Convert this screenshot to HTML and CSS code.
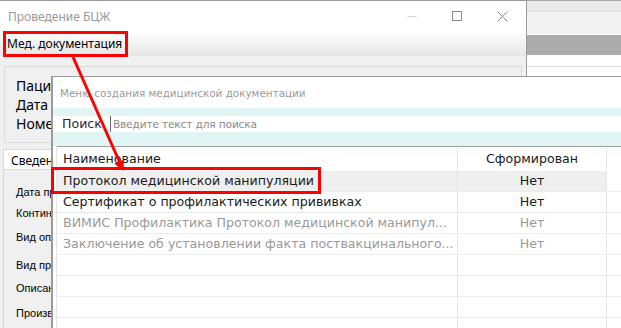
FILE: index.html
```html
<!DOCTYPE html>
<html lang="ru">
<head>
<meta charset="utf-8">
<title>Меню создания медицинской документации</title>
<link rel="stylesheet" href="styles.css">
</head>
<body>
<div class="desk">
  <div class="behind">
    <div class="bh-top"></div>
    <div class="bh-bar"></div>
    <div class="bh-gap"></div>
    <div class="bh-dark"></div>
    <div class="bh-white"></div>
  </div>

  <div class="win">
    <div class="titlebar">
      <span class="title">Проведение БЦЖ</span>
      <div class="controls">
        <span class="ctl-min"></span>
        <span class="ctl-max"></span>
        <svg class="ctl-close" width="11" height="11" viewBox="0 0 11 11"><path d="M0.5 0.5 L10.5 10.5 M10.5 0.5 L0.5 10.5" stroke="#8a8a8a" stroke-width="1" fill="none"/></svg>
      </div>
    </div>
    <div class="menubar"><span class="menu-item">Мед. документация</span></div>
    <div class="winbody">
      <div class="groupbox">
        <div class="gb-line">Пациент: Иванов Иван Иванович</div>
        <div class="gb-line">Дата рождения: 01.01.2023</div>
        <div class="gb-line">Номер карты: 000123</div>
      </div>
      <div class="tabs"><div class="tab">Сведения о прививке</div></div>
      <div class="tabpanel">
        <div class="lbl">Дата проведения</div>
        <div class="lbl">Контингент</div>
        <div class="lbl">Вид оплаты</div>
        <div class="lbl">Вид прививки</div>
        <div class="lbl">Описание</div>
        <div class="lbl">Производитель</div>
      </div>
    </div>
  </div>

  <div class="dialog">
    <div class="dlg-title">Меню создания медицинской документации</div>
    <div class="search">
      <span class="search-label">Поиск</span>
      <span class="search-input">Введите текст для поиска</span>
    </div>
    <div class="grid">
      <div class="row head"><div class="c1">Наименование</div><div class="c2">Сформирован</div><div class="c3"></div></div>
      <div class="row sel"><div class="c1">Протокол медицинской манипуляции</div><div class="c2">Нет</div><div class="c3"></div></div>
      <div class="row"><div class="c1">Сертификат о профилактических прививках</div><div class="c2">Нет</div><div class="c3"></div></div>
      <div class="row dim"><div class="c1">ВИМИС Профилактика Протокол медицинской манипул...</div><div class="c2">Нет</div><div class="c3"></div></div>
      <div class="row dim"><div class="c1">Заключение об установлении факта поствакцинального...</div><div class="c2">Нет</div><div class="c3"></div></div>
      <div class="row"><div class="c1"></div><div class="c2"></div><div class="c3"></div></div>
      <div class="row"><div class="c1"></div><div class="c2"></div><div class="c3"></div></div>
      <div class="row"><div class="c1"></div><div class="c2"></div><div class="c3"></div></div>
      <div class="row"><div class="c1"></div><div class="c2"></div><div class="c3"></div></div>
    </div>
  </div>

  <div class="mark mark-menu"></div>
  <div class="mark mark-row"></div>
  <svg class="arrow" width="621" height="328" viewBox="0 0 621 328">
    <line x1="73" y1="57" x2="120" y2="163" stroke="#f00" stroke-width="3"/>
    <polygon points="123.5,171 114.2,163.6 123.8,159.4" fill="#f00"/>
  </svg>
</div>
</body>
</html>
```

FILE: styles.css
```css
* { box-sizing: border-box; }
html, body { margin: 0; padding: 0; }
body {
  width: 621px;
  height: 328px;
  overflow: hidden;
  background: #ffffff;
  font-family: "Noto Sans", "Open Sans", sans-serif;
}
.desk {
  position: relative;
  width: 621px;
  height: 328px;
  overflow: hidden;
}

/* window behind, at the right */
.behind {
  position: absolute;
  left: 500px;
  top: 0;
  width: 121px;
  height: 328px;
  display: flex;
  flex-direction: column;
  background: #ffffff;
}
.bh-top { height: 12px; background: #eaeaea; border-top: 1px solid #a8a8a8; border-bottom: 1px solid #dedede; }
.bh-bar { height: 22px; background: #f2f2f2; }
.bh-gap { height: 1px; background: #ffffff; }
.bh-dark { height: 20px; background: #ababab; }
.bh-white { height: 12px; background: #ffffff; border-bottom: 1px solid #dcdcdc; }

/* main window */
.win {
  position: absolute;
  left: 0;
  top: 0;
  width: 527px;
  height: 328px;
  background: #f0f0f0;
  border-top: 1px solid #9a9a9a;
  border-right: 1px solid #9a9a9a;
  display: flex;
  flex-direction: column;
}
.titlebar {
  height: 30px;
  flex: none;
  background: #ffffff;
  display: flex;
  align-items: center;
  justify-content: space-between;
  padding: 0 18px 0 8px;
}
.title {
  color: #9a9a9a;
  font-size: 12px;
}
.controls {
  display: flex;
  align-items: center;
  gap: 35px;
}
.ctl-min { width: 10px; height: 1px; background: #d4d4d4; }
.ctl-max { width: 10px; height: 10px; border: 1px solid #8a8a8a; }
.ctl-close { display: block; }

.menubar {
  height: 25px;
  flex: none;
  background: linear-gradient(#ffffff, #e6e6e6);
  display: flex;
  align-items: center;
  padding-left: 7px;
}
.menu-item { font-size: 12px; color: #000; }

.winbody {
  flex: 1;
  display: flex;
  flex-direction: column;
  padding: 10px 4px 0 3px;
}
.groupbox {
  height: 77px;
  margin-left: 1px;
  border: 1px solid #dadada;
  padding: 9px 0 0 11px;
  display: flex;
  flex-direction: column;
}
.gb-line {
  font-size: 14px;
  line-height: 19px;
  color: #000;
  white-space: nowrap;
}
.tabs {
  margin-top: 6px;
  display: flex;
}
.tab {
  background: #ffffff;
  height: 20px;
  padding: 2px 6px 0 7px;
  font-size: 12px;
  line-height: 17px;
  color: #000;
  border: 1px solid #dadada;
  border-bottom: none;
}
.tabpanel {
  flex: 1;
  border-left: 1px solid #d6d6d6;
  border-top: 1px solid #dadada;
  padding: 15px 0 0 12px;
  display: grid;
  grid-template-rows: 21px 24px 28px 23px 25px 24px;
  align-content: start;
}
.lbl {
  font-family: "Liberation Sans", Arial, sans-serif;
  font-size: 11px;
  line-height: 14px;
  color: #000;
  white-space: nowrap;
}

/* dialog */
.dialog {
  position: absolute;
  left: 51px;
  top: 76px;
  width: 600px;
  height: 270px;
  background: #ffffff;
  border-top: 1px solid #9a9a9a;
  border-left: 2px solid #9a9a9a;
  display: flex;
  flex-direction: column;
  font-family: "DejaVu Sans", sans-serif;
}
.dlg-title {
  height: 31px;
  flex: none;
  padding: 9px 0 0 7px;
  font-size: 10.4px;
  line-height: 15px;
  color: #9a9a9a;
  white-space: nowrap;
}
.search {
  height: 38px;
  flex: none;
  background: linear-gradient(#e1f5f5 0, #e1f5f5 8px, #ffffff 8px, #ffffff 24px, #e1f5f5 24px, #e1f5f5 38px);
  display: flex;
  align-items: flex-start;
  padding: 8px 0 0 9px;
}
.search-label {
  font-size: 12.6px;
  line-height: 16px;
  color: #2b2540;
}
.search-input {
  margin-left: 8px;
  padding-left: 2px;
  border-left: 1px solid #6a6a6a;
  font-size: 10.6px;
  letter-spacing: -0.15px;
  line-height: 16px;
  color: #8a8a8a;
  white-space: nowrap;
}
.grid {
  flex: 1;
  border-top: 1px solid #a0a0a0;
  margin-left: 3px;
  border-left: 1px solid #e6e6e6;
  display: flex;
  flex-direction: column;
}
.row {
  display: flex;
  height: 21px;
  flex: none;
  border-bottom: 1px solid #ececec;
  font-size: 12.6px;
  color: #1a1a1a;
}
.row.head {
  height: 24px;
  border-bottom: none;
}
.row .c1 {
  width: 400px;
  flex: none;
  padding-left: 6px;
  line-height: 20px;
  white-space: nowrap;
  overflow: hidden;
}
.row.head .c1, .row.head .c2 { line-height: 24px; }
.row .c2 {
  width: 150px;
  flex: none;
  border-left: 1px solid #e6e6e6;
  border-right: 1px solid #e6e6e6;
  text-align: center;
  line-height: 20px;
}
.row .c3 { flex: 1; }
.row.sel .c1, .row.sel .c2 { background: #efefef; }
.row.dim { color: #9a9a9a; }

/* annotations */
.mark {
  position: absolute;
  border: 3px solid #f00;
}
.mark-menu { left: 3px; top: 31px; width: 125px; height: 26px; }
.mark-row { left: 51px; top: 167px; width: 270px; height: 27px; }
.arrow {
  position: absolute;
  left: 0;
  top: 0;
}
```
